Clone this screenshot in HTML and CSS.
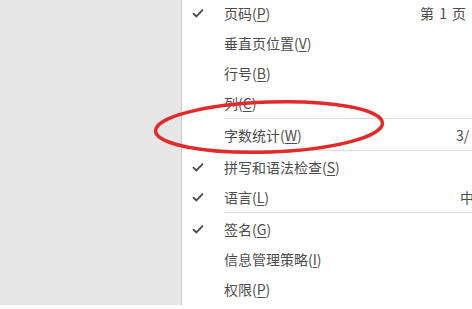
FILE: index.html
```html
<!DOCTYPE html>
<html lang="zh-CN">
<head>
<meta charset="utf-8">
<link rel="stylesheet" href="styles.css">
</head>
<body>
<div class="page">
  <div class="side"></div>
  <div class="menu">
    <div class="row"><span class="chk"><svg viewBox="0 0 12 10" width="12" height="10"><path d="M1 5.2 L4.3 8.4 L11 1.6" fill="none" stroke="#4a4a4a" stroke-width="1.8"/></svg></span><span class="lbl">页码(<u>P</u>)</span><span class="val">第 1 页</span></div>
    <div class="row"><span class="chk"></span><span class="lbl">垂直页位置(<u>V</u>)</span></div>
    <div class="row"><span class="chk"></span><span class="lbl">行号(<u>B</u>)</span></div>
    <div class="row"><span class="chk"></span><span class="lbl">列(<u>C</u>)</span></div>
    <div class="sep"></div>
    <div class="row"><span class="chk"></span><span class="lbl">字数统计(<u>W</u>)</span><span class="val val-w">3/</span></div>
    <div class="sep"></div>
    <div class="row"><span class="chk"><svg viewBox="0 0 12 10" width="12" height="10"><path d="M1 5.2 L4.3 8.4 L11 1.6" fill="none" stroke="#4a4a4a" stroke-width="1.8"/></svg></span><span class="lbl">拼写和语法检查(<u>S</u>)</span></div>
    <div class="row"><span class="chk"><svg viewBox="0 0 12 10" width="12" height="10"><path d="M1 5.2 L4.3 8.4 L11 1.6" fill="none" stroke="#4a4a4a" stroke-width="1.8"/></svg></span><span class="lbl">语言(<u>L</u>)</span><span class="val val-l">中</span></div>
    <div class="sep"></div>
    <div class="row"><span class="chk"><svg viewBox="0 0 12 10" width="12" height="10"><path d="M1 5.2 L4.3 8.4 L11 1.6" fill="none" stroke="#4a4a4a" stroke-width="1.8"/></svg></span><span class="lbl">签名(<u>G</u>)</span></div>
    <div class="row"><span class="chk"></span><span class="lbl">信息管理策略(<u>I</u>)</span></div>
    <div class="row"><span class="chk"></span><span class="lbl">权限(<u>P</u>)</span></div>
  </div>
  <svg class="mark" viewBox="0 0 472 309" width="472" height="309">
    <ellipse cx="269" cy="127" rx="113.5" ry="25" transform="rotate(-2 269 127)" fill="none" stroke="#e12a2a" stroke-width="3.5"/>
  </svg>
</div>
</body>
</html>
```
FILE: styles.css
```css
html, body {
  margin: 0;
  padding: 0;
  background: #ffffff;
  overflow: hidden;
}
.page {
  position: relative;
  width: 472px;
  height: 309px;
  display: flex;
  align-items: flex-start;
  overflow: hidden;
  font-family: "Noto Sans CJK SC", "Noto Sans", sans-serif;
  font-size: 14px;
  color: #4d4d4d;
}
.side {
  width: 181px;
  height: 305px;
  flex: none;
  background: #e6e6e6;
  border-right: 1px solid #c9c9c9;
}
.menu {
  flex: none;
  width: 290px;
  margin-top: -2px;
  display: flex;
  flex-direction: column;
}
.row {
  height: 30px;
  display: flex;
  align-items: center;
  white-space: nowrap;
}
.chk {
  width: 42px;
  flex: none;
  display: flex;
  justify-content: flex-start;
  padding-left: 10px;
  box-sizing: border-box;
}
.chk svg { display: block; }
.lbl {
  width: 196px;
  flex: none;
  padding-bottom: 1px;
}
.lbl u {
  text-underline-offset: 2px;
}
.val {
  flex: none;
  padding-bottom: 1px;
  word-spacing: 2px;
}
.val-w { padding-left: 36px; }
.val-l { padding-left: 40px; }
.sep {
  height: 1px;
  margin-left: 42px;
  margin-bottom: 1px;
  background: #dcdcdc;
}
.mark {
  position: absolute;
  left: 0;
  top: 0;
  pointer-events: none;
}
```
